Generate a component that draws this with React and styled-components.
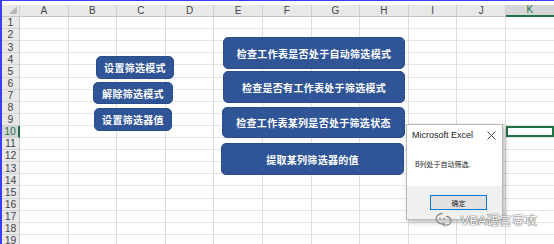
import React from "react";
import styled, { createGlobalStyle } from "styled-components";

const GlobalStyle = createGlobalStyle`
  html, body {
    margin: 0;
    padding: 0;
    background: #fff;
    overflow: hidden;
  }
`;

const COLS = ["A", "B", "C", "D", "E", "F", "G", "H", "I", "J", "K"];
const ROWS = Array.from({ length: 20 }, (_, i) => i + 1);

const Frame = styled.div`
  position: relative;
  width: 554px;
  height: 244px;
  overflow: hidden;
  padding-top: 5px;
  padding-left: 2px;
  box-sizing: border-box;
  font-family: "Liberation Sans", Arial, sans-serif;

  &::after {
    content: "";
    position: absolute;
    inset: 0;
    border-top: 1px solid #3c3cf6;
    border-left: 2px solid #3c3cf6;
    pointer-events: none;
    z-index: 20;
  }
`;

const Sheet = styled.div`
  display: grid;
  grid-template-columns: 18px repeat(11, 48.6px);
  grid-auto-rows: 12.1px;
`;

const Corner = styled.div`
  position: relative;
  background: #e8e8e8;
  border-right: 1px solid #d0d0d0;
  border-bottom: 1px solid #c4c4c4;

  &::before {
    content: "";
    position: absolute;
    right: 2px;
    bottom: 2px;
    border-style: solid;
    border-width: 0 0 8px 8px;
    border-color: transparent transparent #b8b8b8 transparent;
  }
`;

const ColHead = styled.div`
  display: flex;
  align-items: center;
  justify-content: center;
  background: ${({ $active }) => ($active ? "#d6d6d6" : "#e8e8e8")};
  border-right: 1px solid #cfcfcf;
  border-bottom: ${({ $active }) => ($active ? "2px solid #217346" : "1px solid #c4c4c4")};
  color: ${({ $active }) => ($active ? "#217346" : "#444")};
  font-size: 10px;
  line-height: 1;
  box-sizing: border-box;
`;

const RowHead = styled.div`
  display: flex;
  align-items: center;
  justify-content: center;
  background: ${({ $active }) => ($active ? "#d6d6d6" : "#e8e8e8")};
  border-right: ${({ $active }) => ($active ? "2px solid #217346" : "1px solid #c4c4c4")};
  border-bottom: 1px solid #d2d2d2;
  color: ${({ $active }) => ($active ? "#217346" : "#444")};
  font-size: 10.5px;
  line-height: 1;
  box-sizing: border-box;
`;

const Cell = styled.div`
  border-right: 1px solid #dcdcdc;
  border-bottom: 1px solid #e4e4e4;
  box-sizing: border-box;
  box-shadow: ${({ $selected }) => ($selected ? "inset 0 0 0 2px #217346" : "none")};
`;

const Shape = styled.div`
  position: absolute;
  left: ${({ $x }) => $x}px;
  top: ${({ $y }) => $y}px;
  width: ${({ $w }) => $w}px;
  height: ${({ $h }) => $h}px;
  display: flex;
  align-items: center;
  justify-content: center;
  background: #2f5597;
  border: 1px solid #2a4d8a;
  border-radius: 5px;
  box-sizing: border-box;
  color: #fff;
  font-family: "Noto Sans CJK SC", "Liberation Sans", sans-serif;
  font-weight: 700;
  font-size: 10px;
  letter-spacing: 0.3px;
  z-index: 2;
`;

const Dialog = styled.div`
  position: absolute;
  left: 406px;
  top: 124px;
  width: 97px;
  height: 96px;
  display: flex;
  flex-direction: column;
  background: #fff;
  border: 1px solid #b9b9b9;
  box-sizing: border-box;
  box-shadow: 2px 2px 5px rgba(0, 0, 0, 0.28);
  z-index: 5;
`;

const TitleBar = styled.div`
  display: flex;
  align-items: center;
  justify-content: space-between;
  height: 20px;
  padding: 0 6px 0 5px;
  font-family: "Liberation Sans", Arial, sans-serif;
  font-size: 9px;
  color: #222;
`;

const DialogBody = styled.div`
  flex: 1;
  display: flex;
  align-items: center;
  padding-left: 8px;
  padding-bottom: 4px;
  font-family: "Noto Sans CJK SC", sans-serif;
  font-size: 7px;
  color: #222;
`;

const DialogFoot = styled.div`
  height: 33px;
  display: flex;
  align-items: center;
  justify-content: flex-end;
  padding-right: 15px;
  background: #f0f0f0;
`;

const OkButton = styled.div`
  width: 57px;
  height: 15px;
  display: flex;
  align-items: center;
  justify-content: center;
  background: #e1e1e1;
  border: 1px solid #0078d7;
  box-sizing: border-box;
  font-family: "Noto Sans CJK SC", sans-serif;
  font-size: 7px;
  color: #222;
`;

const Watermark = styled.div`
  position: absolute;
  left: 434px;
  top: 210px;
  display: flex;
  align-items: center;
  gap: 7px;
  z-index: 6;
`;

const MarkText = styled.span`
  font-family: "Liberation Sans", "Noto Sans CJK SC", sans-serif;
  font-size: 12.5px;
  color: #fff;
  text-shadow: 0 0 1px #666, 0 0 1px #666, 0 0 1px #666;
  letter-spacing: 0.2px;
`;

const leftButtons = [
  { label: "设置筛选模式", x: 96, y: 56, w: 78, h: 23 },
  { label: "解除筛选模式", x: 93, y: 82, w: 80, h: 22 },
  { label: "设置筛选器值", x: 94, y: 108, w: 78, h: 23 },
];

const rightButtons = [
  { label: "检查工作表是否处于自动筛选模式", x: 223, y: 37, w: 182, h: 32 },
  { label: "检查是否有工作表处于筛选模式", x: 223, y: 71, w: 182, h: 32 },
  { label: "检查工作表某列是否处于筛选状态", x: 222, y: 107, w: 183, h: 31 },
  { label: "提取某列筛选器的值", x: 221, y: 143, w: 183, h: 32 },
];

const WeChatIcon = () => (
  <svg width="20" height="17" viewBox="0 0 20 17" fill="none" stroke="#8a8a8a" strokeWidth="1.3">
    <path d="M8 2.5a6 5.2 0 1 0 0.5 10.4l1.5 1.4v-2.3" strokeLinecap="round" />
    <path d="M12.5 5.5a5 4.3 0 1 1 -1 8.6" strokeLinecap="round" />
    <circle cx="6" cy="7.5" r="0.9" fill="#8a8a8a" stroke="none" />
    <circle cx="10" cy="7.5" r="0.9" fill="#8a8a8a" stroke="none" />
  </svg>
);

const App = () => {
  return (
    <>
      <GlobalStyle />
      <Frame>
        <Sheet>
          <Corner />
          {COLS.map((c) => (
            <ColHead key={c} $active={c === "K"}>
              {c}
            </ColHead>
          ))}
          {ROWS.map((r) => (
            <React.Fragment key={r}>
              <RowHead $active={r === 10}>{r}</RowHead>
              {COLS.map((c) => (
                <Cell key={c + r} $selected={r === 10 && c === "K"} />
              ))}
            </React.Fragment>
          ))}
        </Sheet>

        {leftButtons.map((b) => (
          <Shape key={b.label} $x={b.x} $y={b.y} $w={b.w} $h={b.h}>
            {b.label}
          </Shape>
        ))}
        {rightButtons.map((b) => (
          <Shape key={b.label} $x={b.x} $y={b.y} $w={b.w} $h={b.h}>
            {b.label}
          </Shape>
        ))}

        <Dialog>
          <TitleBar>
            <span>Microsoft Excel</span>
            <svg width="9" height="9" viewBox="0 0 9 9" stroke="#333" strokeWidth="0.9">
              <path d="M0.5 0.5l8 8M8.5 0.5l-8 8" />
            </svg>
          </TitleBar>
          <DialogBody>B列处于自动筛选.</DialogBody>
          <DialogFoot>
            <OkButton>确定</OkButton>
          </DialogFoot>
        </Dialog>

        <Watermark>
          <WeChatIcon />
          <MarkText>VBA语言専攻</MarkText>
        </Watermark>
      </Frame>
    </>
  );
};

export default App;
